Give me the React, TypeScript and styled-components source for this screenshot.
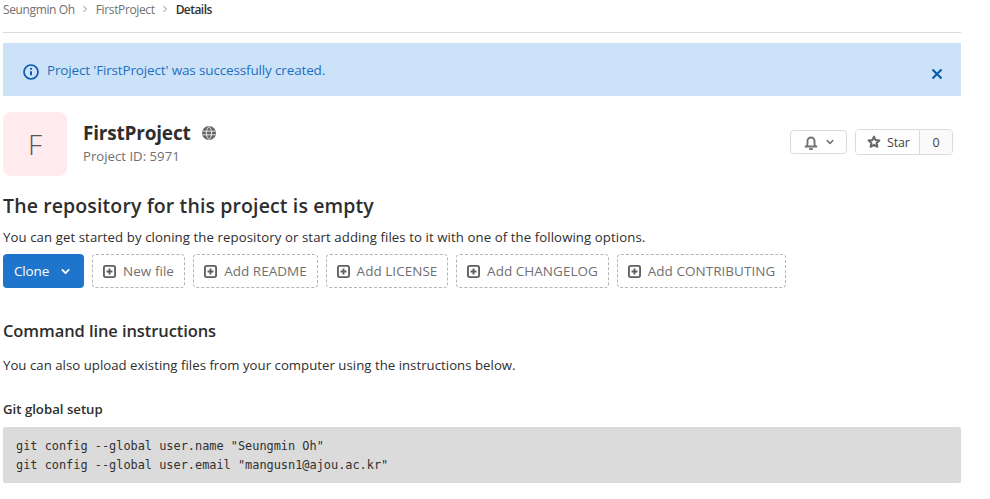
import styled, { createGlobalStyle } from 'styled-components';

const GlobalStyle = createGlobalStyle`
  html, body {
    margin: 0;
    padding: 0;
    background: #fff;
    overflow: hidden;
  }
  body {
    font-family: "Open Sans", "Noto Sans", sans-serif;
    font-size: 14px;
    color: #2e2e2e;
  }
`;

const Page = styled.div`
  width: 961px;
  height: 499px;
  overflow: hidden;
  padding-left: 3px;
  box-sizing: border-box;
`;

const Breadcrumbs = styled.nav`
  box-sizing: border-box;
  padding-top: 1px;
  display: flex;
  align-items: flex-start;
  border-bottom: 1px solid #dbdbdb;
  height: 33px;
  font-size: 12px;
  line-height: 18px;
  letter-spacing: -0.35px;
  color: #707070;
`;

const Crumb = styled.span<{ $current?: boolean }>`
  color: ${(p) => (p.$current ? '#303030' : '#707070')};
  font-weight: ${(p) => (p.$current ? 600 : 400)};
  letter-spacing: ${(p) => (p.$current ? '-0.55px' : '-0.37px')};
`;

const CrumbSep = styled.svg`
  width: 8px;
  height: 8px;
  margin: 4px 7px 0 6px;
  color: #8f8f8f;
`;

const Flash = styled.div`
  margin-top: 10px;
  height: 53px;
  background: #cbe2f9;
  color: #1f6fbf;
  display: flex;
  align-items: flex-start;
  padding: 18px 18px 0 20px;
  box-sizing: border-box;
  font-size: 13.5px;
  line-height: 18px;
  letter-spacing: -0.15px;
`;

const FlashIcon = styled.svg`
  width: 16px;
  height: 16px;
  margin: 3px 8px 0 0;
  flex: none;
  color: #0b5cad;
`;

const FlashText = styled.span`
  flex: 1;
`;

const CloseIcon = styled.svg`
  width: 12px;
  height: 12px;
  margin-top: 7px;
  color: #0b5cad;
`;

const ProjectHeader = styled.header`
  margin-top: 16px;
  display: flex;
  align-items: flex-start;
  padding-right: 8px;
`;

const Avatar = styled.div`
  width: 64px;
  height: 64px;
  border-radius: 8px;
  background: #ffebee;
  color: #555;
  font-size: 28px;
  font-weight: 300;
  display: flex;
  align-items: center;
  justify-content: center;
  flex: none;
`;

const ProjectInfo = styled.div`
  margin-left: 16px;
  padding-top: 8px;
  flex: 1;
`;

const TitleRow = styled.div`
  display: flex;
  align-items: center;
  gap: 11px;
`;

const ProjectName = styled.h1`
  margin: 0;
  font-size: 19px;
  line-height: 26px;
  font-weight: 700;
  letter-spacing: -0.2px;
  color: #2e2e2e;
`;

const GlobeIcon = styled.svg`
  width: 14px;
  height: 14px;
  color: #666;
`;

const ProjectId = styled.div`
  margin-top: 1px;
  font-size: 13.2px;
  line-height: 18px;
  color: #707070;
`;

const HeaderActions = styled.div`
  display: flex;
  align-items: flex-start;
  gap: 8px;
  padding-top: 17px;
`;

const NotifyButton = styled.button`
  width: 57px;
  height: 24px;
  margin-top: 1px;
  border: 1px solid #dbdbdb;
  border-radius: 4px;
  background: #fff;
  display: flex;
  align-items: center;
  justify-content: center;
  gap: 8px;
  padding: 0;
  color: #707070;
`;

const StarGroup = styled.div`
  display: flex;
  height: 24px;
  border: 1px solid #dbdbdb;
  border-radius: 4px;
  overflow: hidden;
`;

const StarButton = styled.div`
  width: 63px;
  display: flex;
  align-items: center;
  padding-left: 11px;
  box-sizing: border-box;
  gap: 6px;
  font-size: 12.5px;
  letter-spacing: -0.2px;
  color: #444;
  background: #fff;
`;

const StarCount = styled.div`
  width: 32px;
  border-left: 1px solid #dbdbdb;
  background: #fafafa;
  display: flex;
  align-items: center;
  justify-content: center;
  font-size: 12.5px;
  color: #444;
`;

const EmptyTitle = styled.h2`
  margin: 17px 0 0;
  font-size: 19.5px;
  line-height: 26px;
  font-weight: 600;
  letter-spacing: 0.12px;
  color: #2e2e2e;
`;

const EmptyText = styled.p`
  margin: 9px 0 0;
  font-size: 13.2px;
  line-height: 18px;
  letter-spacing: 0.09px;
  color: #2e2e2e;
`;

const ButtonRow = styled.div`
  margin-top: 8px;
  display: flex;
  gap: 8px;
`;

const CloneButton = styled.div`
  width: 81px;
  height: 34px;
  box-sizing: border-box;
  padding-left: 11px;
  background: #1f75cb;
  border-radius: 4px;
  color: #fff;
  display: flex;
  align-items: center;
  gap: 12px;
  font-size: 13.5px;
  letter-spacing: -0.15px;
`;

const DashedButton = styled.div<{ $width: number }>`
  width: ${(p) => p.$width}px;
  height: 34px;
  box-sizing: border-box;
  border: 1px dashed #b5b5b5;
  border-radius: 4px;
  display: flex;
  align-items: center;
  justify-content: center;
  gap: 7px;
  font-size: 13.5px;
  letter-spacing: 0.03px;
  color: #707070;
`;

const PlusIcon = styled.svg`
  width: 13px;
  height: 13px;
  color: #5f5f5f;
  flex: none;
`;

const SectionTitle = styled.h3`
  margin: 32px 0 0;
  font-size: 16.5px;
  line-height: 22px;
  font-weight: 600;
  letter-spacing: -0.09px;
  color: #2e2e2e;
`;

const SectionText = styled.p`
  margin: 14px 0 0;
  font-size: 13.2px;
  line-height: 18px;
  letter-spacing: 0.03px;
  color: #2e2e2e;
`;

const SubTitle = styled.h5`
  margin: 26px 0 0;
  font-size: 13.2px;
  line-height: 18px;
  font-weight: 600;
  color: #2e2e2e;
`;

const CodeBlock = styled.pre`
  margin: 9px 0 0;
  height: 56px;
  box-sizing: border-box;
  padding: 10px 13px;
  background: #dbdbdb;
  border-radius: 2px;
  font-family: "DejaVu Sans Mono", "Liberation Mono", monospace;
  font-size: 11.9px;
  line-height: 19px;
  color: #303030;
`;

function ChevronDown({ size = 8 }: { size?: number }) {
  return (
    <svg width={size} height={size} viewBox="0 0 10 10" fill="none" stroke="currentColor" strokeWidth="2" strokeLinecap="round" strokeLinejoin="round">
      <path d="M1.5 3.2 5 6.8l3.5-3.6" />
    </svg>
  );
}

function Separator() {
  return (
    <CrumbSep viewBox="0 0 8 8" fill="none" stroke="currentColor" strokeWidth="1">
      <path d="M2.5 1 5.5 4l-3 3" />
    </CrumbSep>
  );
}

function Plus() {
  return (
    <PlusIcon viewBox="0 0 14 14">
      <rect x="1" y="1" width="12" height="12" rx="2" fill="none" stroke="currentColor" strokeWidth="2" />
      <path d="M7 3.8v6.4M3.8 7h6.4" stroke="currentColor" strokeWidth="2" />
    </PlusIcon>
  );
}

const templates = [
  { label: 'New file', width: 93 },
  { label: 'Add README', width: 125 },
  { label: 'Add LICENSE', width: 122 },
  { label: 'Add CHANGELOG', width: 153 },
  { label: 'Add CONTRIBUTING', width: 169 },
];

export default function App() {
  return (
    <Page>
      <GlobalStyle />
      <Breadcrumbs>
        <Crumb>Seungmin Oh</Crumb>
        <Separator />
        <Crumb>FirstProject</Crumb>
        <Separator />
        <Crumb $current>Details</Crumb>
      </Breadcrumbs>

      <Flash>
        <FlashIcon viewBox="0 0 16 16" fill="none">
          <circle cx="8" cy="8" r="7" stroke="currentColor" strokeWidth="1.7" />
          <path d="M8 7.2v4" stroke="currentColor" strokeWidth="2" />
          <circle cx="8" cy="4.8" r="1.1" fill="currentColor" />
        </FlashIcon>
        <FlashText>Project 'FirstProject' was successfully created.</FlashText>
        <CloseIcon viewBox="0 0 12 12" fill="none" stroke="currentColor" strokeWidth="2.2">
          <path d="M1.5 1.5l9 9M10.5 1.5l-9 9" />
        </CloseIcon>
      </Flash>

      <ProjectHeader>
        <Avatar>F</Avatar>
        <ProjectInfo>
          <TitleRow>
            <ProjectName>FirstProject</ProjectName>
            <GlobeIcon viewBox="0 0 14 14">
              <circle cx="7" cy="7" r="7" fill="currentColor" />
              <path d="M0.5 5.2h13M0.5 8.8h13M7 0.5c-3.4 3.5-3.4 9.5 0 13M7 0.5c3.4 3.5 3.4 9.5 0 13" fill="none" stroke="#fff" strokeWidth="0.8" />
            </GlobeIcon>
          </TitleRow>
          <ProjectId>Project ID: 5971</ProjectId>
        </ProjectInfo>
        <HeaderActions>
          <NotifyButton aria-label="Notifications">
            <svg width="14" height="15" viewBox="0 0 14 15" fill="none" stroke="currentColor" strokeWidth="1.9">
              <path d="M.8 11.5h12.4M2.8 11.5c.6-1 .7-2 .7-3.6V6a3.5 3.5 0 0 1 7 0v1.9c0 1.6.1 2.6.7 3.6" />
              <path d="M5.2 14h3.6" />
            </svg>
            <ChevronDown />
          </NotifyButton>
          <StarGroup>
            <StarButton>
              <svg width="14" height="14" viewBox="0 0 14 14" fill="none" stroke="#666" strokeWidth="2" strokeLinejoin="round">
                <path d="M7 1.6l1.6 3.5 3.8.4-2.9 2.5.9 3.8L7 9.8l-3.4 2 .9-3.8L1.6 5.5l3.8-.4z" />
              </svg>
              Star
            </StarButton>
            <StarCount>0</StarCount>
          </StarGroup>
        </HeaderActions>
      </ProjectHeader>

      <EmptyTitle>The repository for this project is empty</EmptyTitle>
      <EmptyText>You can get started by cloning the repository or start adding files to it with one of the following options.</EmptyText>

      <ButtonRow>
        <CloneButton>
          Clone
          <ChevronDown size={9} />
        </CloneButton>
        {templates.map((t) => (
          <DashedButton key={t.label} $width={t.width}>
            <Plus />
            {t.label}
          </DashedButton>
        ))}
      </ButtonRow>

      <SectionTitle>Command line instructions</SectionTitle>
      <SectionText>You can also upload existing files from your computer using the instructions below.</SectionText>
      <SubTitle>Git global setup</SubTitle>
      <CodeBlock>{`git config --global user.name "Seungmin Oh"
git config --global user.email "mangusn1@ajou.ac.kr"`}</CodeBlock>
    </Page>
  );
}
